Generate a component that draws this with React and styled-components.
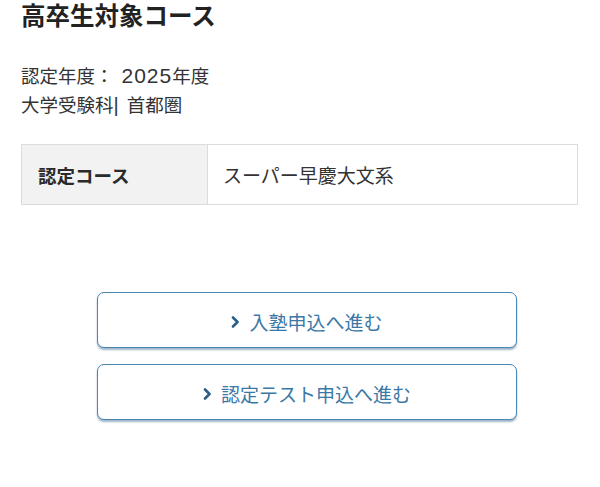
import React from "react";
import styled, { createGlobalStyle } from "styled-components";

const GlobalStyle = createGlobalStyle`
  html, body {
    margin: 0;
    padding: 0;
    background: #ffffff;
  }
  body {
    font-family: "Liberation Sans", "Noto Sans CJK JP", sans-serif;
    color: #333333;
    -webkit-font-smoothing: antialiased;
  }
`;

const Page = styled.main`
  padding: 0 22px 40px 21px;
`;

const Title = styled.h1`
  margin: 0;
  font-size: 24.5px;
  line-height: 34px;
  font-weight: 700;
  color: #222222;
`;

const Info = styled.div`
  margin-top: 28px;
  font-size: 18.5px;
  line-height: 29px;
  color: #333333;
`;

const InfoLine = styled.p`
  margin: 0;
`;

/* numerals in the year line run a little larger than the kana/kanji */
const Num = styled.span`
  margin-left: 8px;
  font-size: 21px;
  line-height: 1;
  letter-spacing: 1px;
`;

const Sep = styled.span`
  margin-right: 3px;
  font-size: 20px;
  line-height: 1;
`;

const Table = styled.table`
  margin-top: 24px;
  width: 100%;
  border-collapse: collapse;
  border: 1px solid #dcdcdc;
`;

const HeadCell = styled.th`
  width: 186px;
  box-sizing: border-box;
  height: 60px;
  padding: 0 0 0 16px;
  background: #f2f2f2;
  border-right: 1px solid #dcdcdc;
  text-align: left;
  font-size: 18.5px;
  font-weight: 700;
  color: #2a2a2a;
`;

const ValueCell = styled.td`
  padding: 0 0 0 15px;
  font-size: 19px;
  color: #333333;
  background: #ffffff;
`;

const Actions = styled.div`
  margin: 87px 0 0 76px;
  width: 420px;
  display: flex;
  flex-direction: column;
  gap: 16px;
`;

const ActionButton = styled.a`
  box-sizing: border-box;
  height: 56px;
  display: flex;
  align-items: center;
  justify-content: center;
  gap: 9px;
  padding-top: 3px;
  border: 1.5px solid #4b85b2;
  border-radius: 7px;
  background: #ffffff;
  box-shadow: 0 2px 2px rgba(40, 90, 130, 0.45);
  color: #3c78a6;
  font-size: 19px;
  text-decoration: none;
  cursor: pointer;
`;

const Chevron = styled.svg`
  width: 9px;
  height: 12px;
  flex: none;
`;

function ChevronIcon() {
  return (
    <Chevron viewBox="0 0 9 12" aria-hidden="true">
      <path
        d="M2 1.5 L6.5 6 L2 10.5"
        fill="none"
        stroke="#2c5f88"
        strokeWidth="2.6"
        strokeLinecap="round"
        strokeLinejoin="round"
      />
    </Chevron>
  );
}

export default function App() {
  return (
    <>
      <GlobalStyle />
      <Page>
        <Title>高卒生対象コース</Title>
        <Info>
          <InfoLine>
            認定年度：<Num>2025</Num>年度
          </InfoLine>
          <InfoLine>
            大学受験科<Sep>|</Sep> 首都圏
          </InfoLine>
        </Info>
        <Table>
          <tbody>
            <tr>
              <HeadCell>認定コース</HeadCell>
              <ValueCell>スーパー早慶大文系</ValueCell>
            </tr>
          </tbody>
        </Table>
        <Actions>
          <ActionButton>
            <ChevronIcon />
            入塾申込へ進む
          </ActionButton>
          <ActionButton>
            <ChevronIcon />
            認定テスト申込へ進む
          </ActionButton>
        </Actions>
      </Page>
    </>
  );
}
